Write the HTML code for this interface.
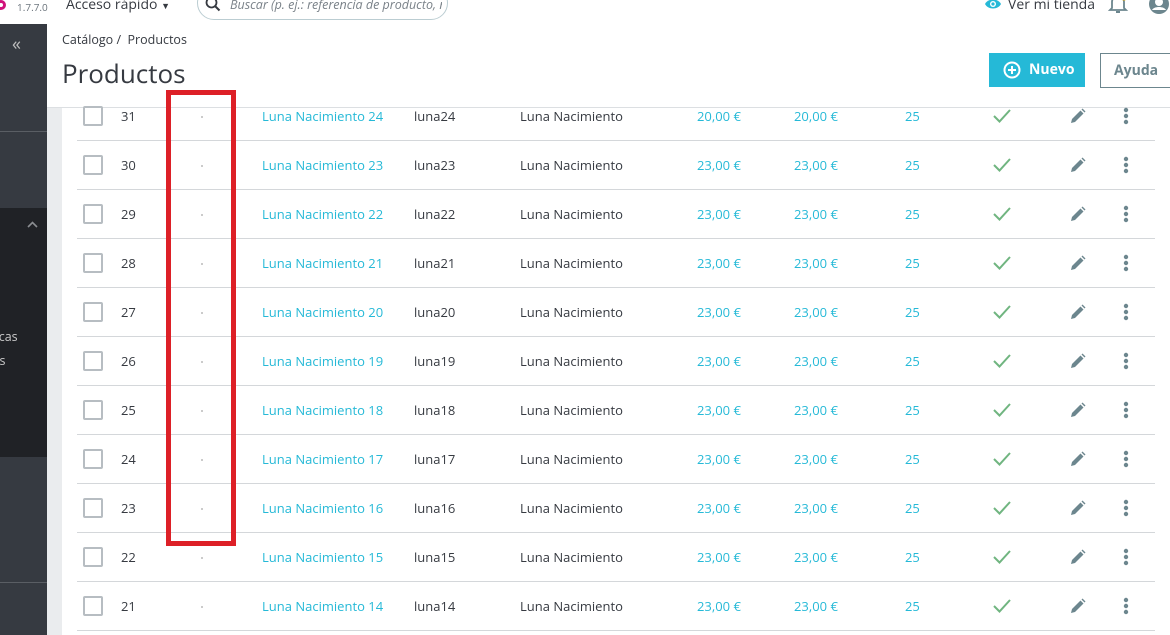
<!DOCTYPE html>
<html><head><meta charset="utf-8"><style>
*{margin:0;padding:0;box-sizing:border-box}
body{width:1170px;height:635px;overflow:hidden;background:#fff;font-family:"Open Sans","Liberation Sans",sans-serif;color:#363a41;position:relative;font-size:13px}
.sb{position:absolute;left:0;top:24px;width:47px;height:611px;background:#363a41}
.sb .l{position:absolute;left:0;width:47px;height:1px;background:#5a5e64}
.dark{position:absolute;left:0;top:184px;width:47px;height:249px;background:#202226;overflow:hidden}
.gut{position:absolute;left:47px;top:108px;width:15px;height:527px;background:#eaecee}
.hdr{position:absolute;left:47px;top:24px;right:0;height:84px;border-bottom:1px solid #dcdfe2;background:#fff}
.row{position:absolute;left:62px;width:1108px;height:49px}
.row .ln{position:absolute;left:15px;right:15px;bottom:0;height:1px;background:#d4d7da}
.c{position:absolute;top:0;line-height:48px;white-space:nowrap}
.cb{position:absolute;left:21px;top:14px;width:20px;height:20px;border:2px solid #b7bdc2;border-radius:2px}
.lk{color:#25b9d7}
.dot{position:absolute;left:139px;top:24px;width:2px;height:2px;background:#bbb;border-radius:1px}
</style></head><body>
<div id="rows"></div>
<div style="position:absolute;left:-4px;top:0;width:10px;height:10px;border:3px solid #d0127a;border-radius:50%"></div>
<div style="position:absolute;left:17px;top:0;font-size:10px;color:#6c757d;line-height:14px">1.7.7.0</div>
<div style="position:absolute;left:66px;top:-4px;font-size:14px;color:#363a41;line-height:18px">Acceso rápido <span style="font-size:9px">▼</span></div>
<div style="position:absolute;left:197px;top:-14px;width:251px;height:34px;border:1px solid #bbcdd2;border-radius:17px;background:#fff"></div>
<svg style="position:absolute;left:205px;top:-4px" width="16" height="16" viewBox="0 0 16 16"><circle cx="6.5" cy="6.5" r="5" fill="none" stroke="#363a41" stroke-width="1.8"/><path d="M10 10l4.5 4.5" stroke="#363a41" stroke-width="2"/></svg>
<div style="position:absolute;left:230px;top:-3px;font-size:12.5px;font-style:italic;color:#7a8289;line-height:16px;width:212px;overflow:hidden;white-space:nowrap">Buscar (p. ej.: referencia de producto, nombre</div>
<svg style="position:absolute;left:984px;top:-3px" width="18" height="14" viewBox="0 0 18 14"><path d="M1 7C4 1 14 1 17 7C14 13 4 13 1 7Z" fill="#25b9d7"/><circle cx="9" cy="7" r="3" fill="#fff"/><circle cx="9" cy="7" r="1.6" fill="#25b9d7"/></svg>
<div style="position:absolute;left:1008px;top:-4px;font-size:14px;line-height:18px;color:#363a41">Ver mi tienda</div>
<svg style="position:absolute;left:1108px;top:-4px" width="22" height="20" viewBox="0 0 22 20"><path d="M4 12V6a6 6 0 0 1 12 0v6l2 2H2z" fill="none" stroke="#6c868e" stroke-width="1.8"/><path d="M8 16h4" stroke="#6c868e" stroke-width="2"/><circle cx="16" cy="1" r="3.5" fill="#f0b400"/></svg>
<svg style="position:absolute;left:1149px;top:-6px" width="20" height="20" viewBox="0 0 20 20"><circle cx="10" cy="10" r="10" fill="#6c868e"/><circle cx="10" cy="8" r="4" fill="#fff"/><path d="M3 16c2-4 12-4 14 0" fill="#fff"/></svg>

<div class="sb">
<div style="position:absolute;left:12px;top:11px;color:#bebebe;font-size:18px;line-height:18px;letter-spacing:-3px">«</div>
<div class="l" style="top:107px"></div>
<div class="dark">
<svg style="position:absolute;left:27px;top:13px" width="11" height="7" viewBox="0 0 11 7"><path d="M1 6l4.5-4.5L10 6" fill="none" stroke="#8a8d91" stroke-width="1.6"/></svg>
<div style="position:absolute;left:-18px;top:120px;color:#c8c8c8;font-size:12.5px">ísticas</div>
<div style="position:absolute;left:-8px;top:144px;color:#c8c8c8;font-size:12.5px">os</div>
</div>
<div class="l" style="top:558px"></div>
</div>

<div class="hdr">
<div style="position:absolute;left:15px;top:7px;font-size:12.5px;color:#363a41">Catálogo&nbsp;/&nbsp; Productos</div>
<div style="position:absolute;left:15px;top:33px;font-size:26px;color:#363a41;line-height:32px">Productos</div>
<div style="position:absolute;left:942px;top:29px;width:96px;height:34px;background:#25b9d7;color:#fff;font-weight:bold;font-size:14px;line-height:34px;padding-left:40px">Nuevo</div>
<svg style="position:absolute;left:956px;top:37px" width="18" height="18" viewBox="0 0 18 18"><circle cx="9" cy="9" r="7.5" fill="none" stroke="#fff" stroke-width="2"/><path d="M9 5v8M5 9h8" stroke="#fff" stroke-width="2"/></svg>
<div style="position:absolute;left:1053px;top:29px;width:80px;height:35px;border:1px solid #6c868e;color:#6c868e;font-weight:bold;font-size:14px;line-height:33px;padding-left:13px">Ayuda</div>
</div>
<div class="gut"></div>
<div id="rows2"></div>
<div style="position:absolute;left:166px;top:90px;width:70px;height:456px;border:5px solid #dd2027"></div>
<script>
(function(){
var html='';
var data=[[31,24,'20,00'],[30,23],[29,22],[28,21],[27,20],[26,19],[25,18],[24,17],[23,16],[22,15],[21,14]];
for(var i=0;i<data.length;i++){
 var d=data[i],p=d[2]||'23,00',ty=92+i*49;
 html+='<div class="row" style="top:'+ty+'px"><div class="cb"></div>'+
 '<div class="c" style="left:59px">'+d[0]+'</div><div class="dot"></div>'+
 '<div class="c lk" style="left:200px">Luna Nacimiento '+d[1]+'</div>'+
 '<div class="c" style="left:352px">luna'+d[1]+'</div>'+
 '<div class="c" style="left:458px">Luna Nacimiento</div>'+
 '<div class="c lk" style="left:635px">'+p+' €</div>'+
 '<div class="c lk" style="left:732px">'+p+' €</div>'+
 '<div class="c lk" style="left:843px">25</div>'+
 '<svg style="position:absolute;left:930px;top:16px" width="20" height="16" viewBox="0 0 20 16"><path d="M2 8l5.5 5.5L18 2" fill="none" stroke="#70b580" stroke-width="2"/></svg>'+
 '<svg style="position:absolute;left:1008px;top:16px" width="16" height="16" viewBox="0 0 16 16"><path d="M1 15l1-4 8.5-8.5 3 3L5 14z" fill="#6c868e"/><path d="M11.5 1.5l1-1 3 3-1 1z" fill="#6c868e"/></svg>'+
 '<svg style="position:absolute;left:1061px;top:15px" width="6" height="18" viewBox="0 0 6 18"><circle cx="3" cy="3" r="2.2" fill="#6c868e"/><circle cx="3" cy="9" r="2.2" fill="#6c868e"/><circle cx="3" cy="15" r="2.2" fill="#6c868e"/></svg>'+
 '<div class="ln"></div></div>';
}
document.getElementById('rows2').innerHTML=html;
})();
</script>
</body></html>
